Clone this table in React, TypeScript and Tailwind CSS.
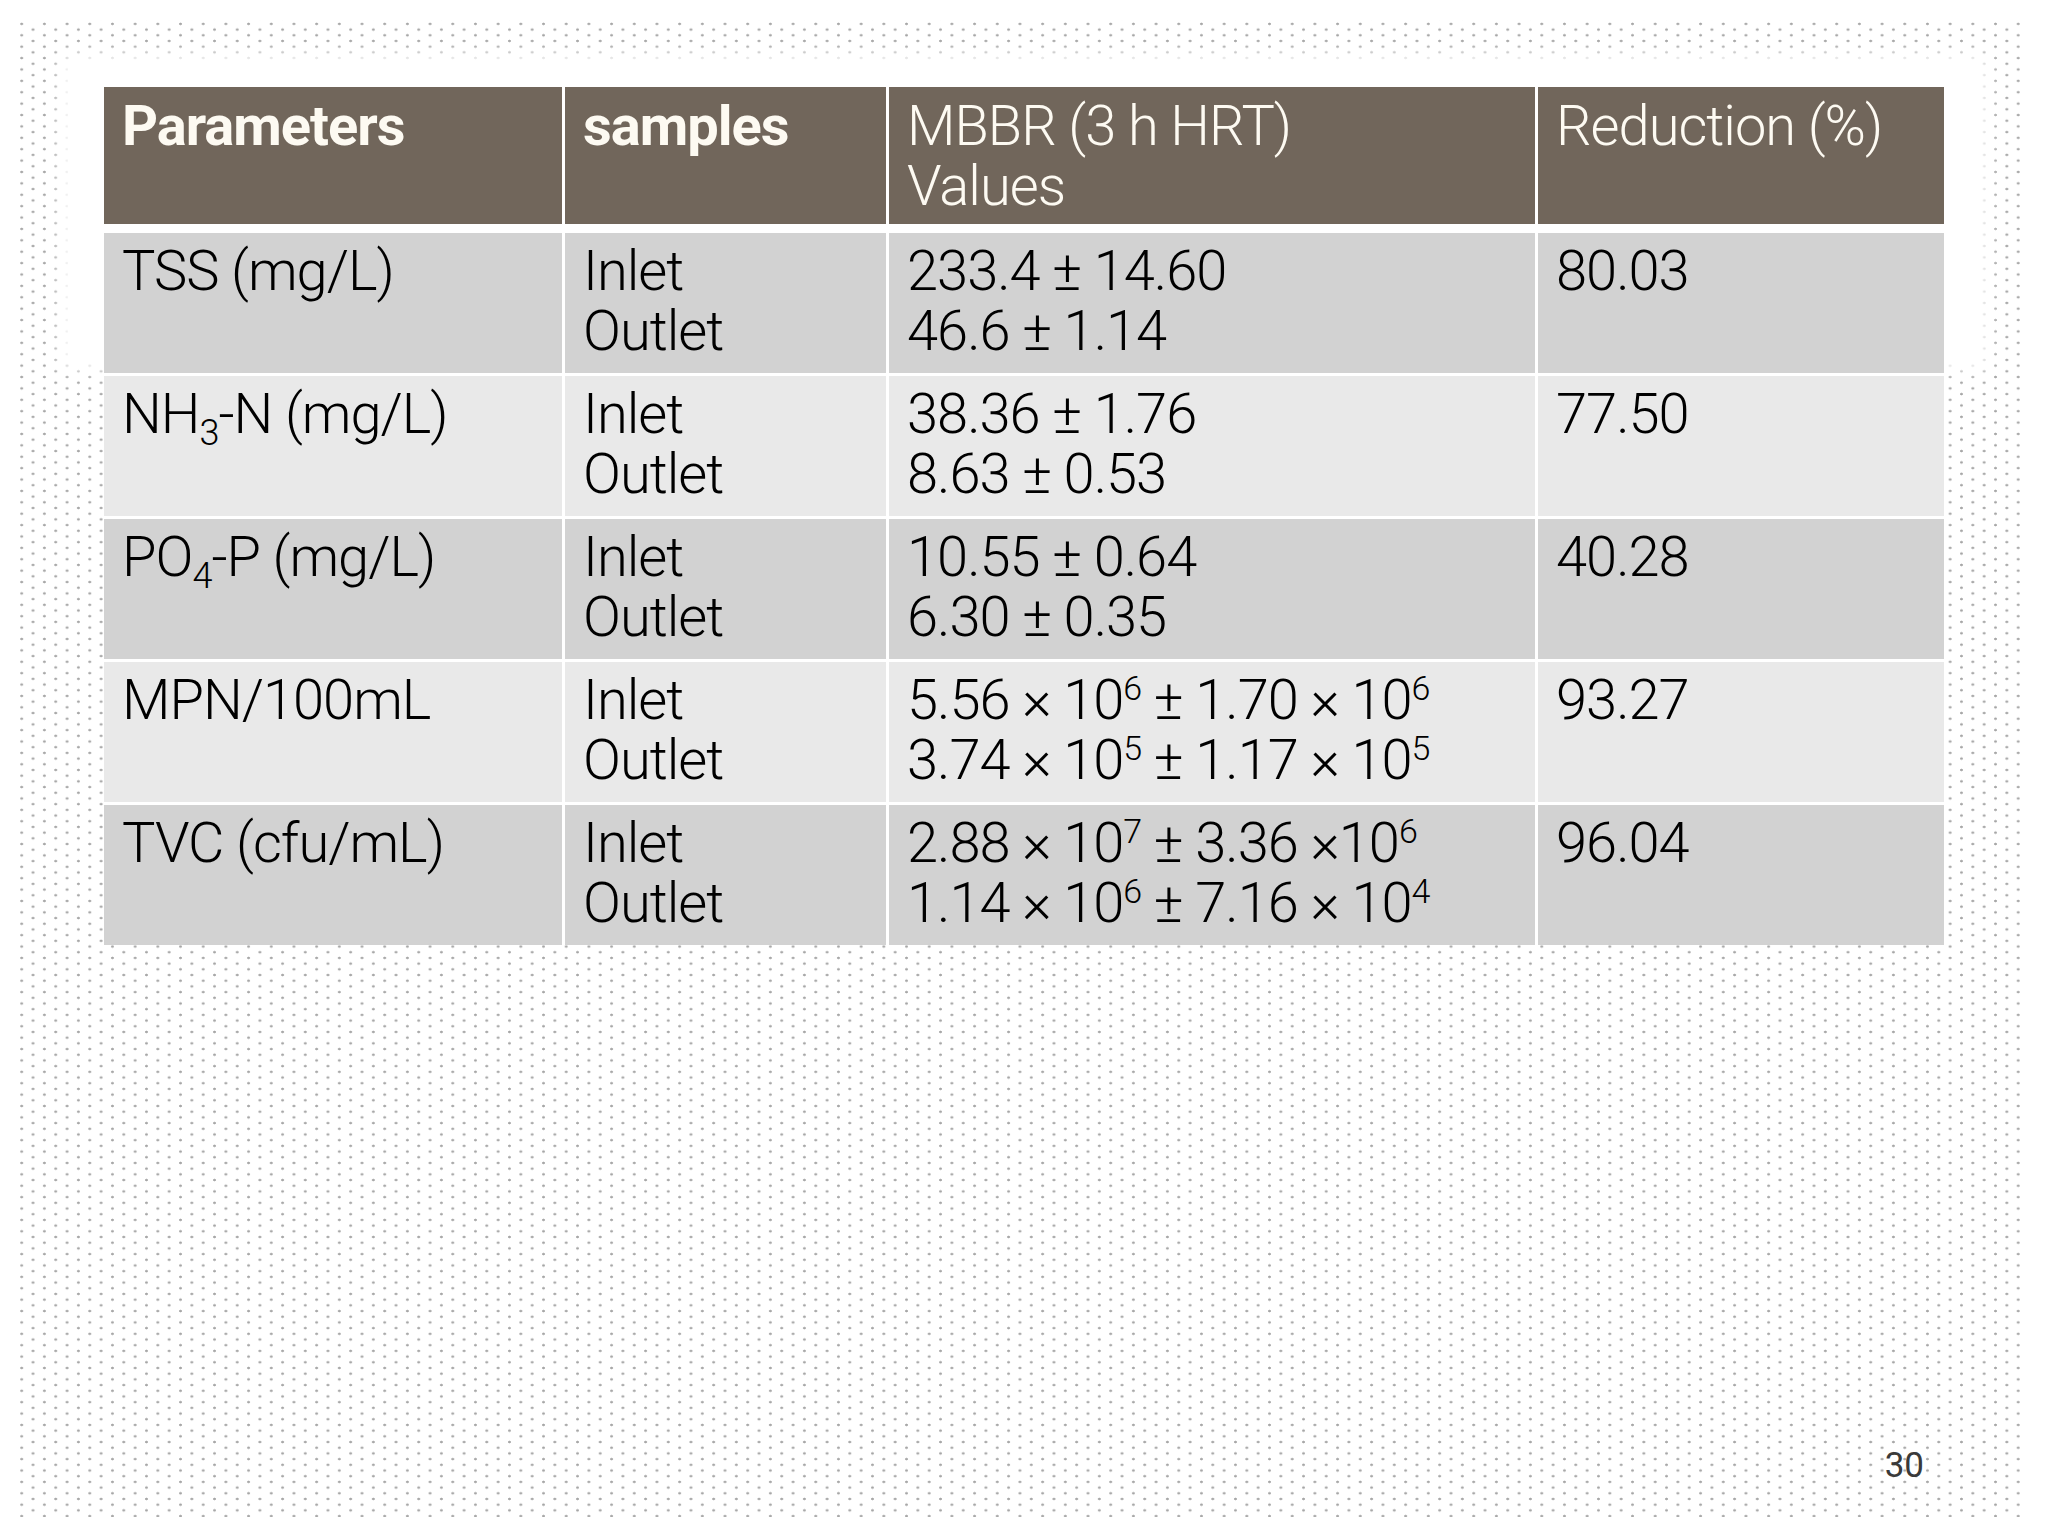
import * as React from "react";

type Row = {
  param: React.ReactNode;
  inlet: React.ReactNode;
  outlet: React.ReactNode;
  reduction: string;
};

const Sup = ({ children }: { children: React.ReactNode }) => (
  <sup className="text-[34px] top-[-19px]">{children}</sup>
);

const Sub = ({ children }: { children: React.ReactNode }) => (
  <sub className="text-[36px] bottom-[-12px]">{children}</sub>
);

const rows: Row[] = [
  {
    param: "TSS (mg/L)",
    inlet: "233.4 ± 14.60",
    outlet: "46.6 ± 1.14",
    reduction: "80.03",
  },
  {
    param: (
      <>
        NH<Sub>3</Sub>-N (mg/L)
      </>
    ),
    inlet: "38.36 ± 1.76",
    outlet: "8.63 ± 0.53",
    reduction: "77.50",
  },
  {
    param: (
      <>
        PO<Sub>4</Sub>-P (mg/L)
      </>
    ),
    inlet: "10.55 ± 0.64",
    outlet: "6.30 ± 0.35",
    reduction: "40.28",
  },
  {
    param: "MPN/100mL",
    inlet: (
      <>
        5.56 × 10<Sup>6</Sup> ± 1.70 × 10<Sup>6</Sup>
      </>
    ),
    outlet: (
      <>
        3.74 × 10<Sup>5</Sup> ± 1.17 × 10<Sup>5</Sup>
      </>
    ),
    reduction: "93.27",
  },
  {
    param: "TVC (cfu/mL)",
    inlet: (
      <>
        2.88 × 10<Sup>7</Sup> ± 3.36 ×10<Sup>6</Sup>
      </>
    ),
    outlet: (
      <>
        1.14 × 10<Sup>6</Sup> ± 7.16 × 10<Sup>4</Sup>
      </>
    ),
    reduction: "96.04",
  },
];

const cols = "grid grid-cols-[458px_321px_646px_406px] gap-x-[3px]";

export default function App() {
  return (
    <div className="w-[2048px] h-[1536px] bg-white p-[20px] font-['Roboto',sans-serif] overflow-hidden">
      <div className="relative w-[2005px] h-[1497px] flex flex-col pl-[84px] pt-[67px] bg-[radial-gradient(circle,#a6a6a6_1px,transparent_1.6px),radial-gradient(circle,#a6a6a6_1px,transparent_1.6px)] [background-size:22.7px_11.4px] [background-position:-9.65px_-1.8px,1.7px_3.9px]">
        {/* white title band behind the top of the table */}
        <div className="absolute left-[48px] top-[42px] w-[1912px] h-[300px] bg-white shadow-[0_0_14px_8px_#ffffff]" />

        <div className="relative w-[1840px] flex flex-col gap-[3px] bg-white text-[56px] leading-[60px] font-light tracking-[-1px]">
          <div className={`${cols} h-[137px] mb-[6px] text-[#fdfaf2]`}>
            <div className="bg-[#71665b] pl-[18px] pt-[9px] font-bold">
              Parameters
            </div>
            <div className="bg-[#71665b] pl-[18px] pt-[9px] font-bold">
              samples
            </div>
            <div className="bg-[#71665b] pl-[18px] pt-[9px]">
              MBBR (3 h HRT)
              <br />
              Values
            </div>
            <div className="bg-[#71665b] pl-[18px] pt-[9px]">Reduction (%)</div>
          </div>

          {rows.map((r, i) => {
            const bg = i % 2 === 0 ? "bg-[#d2d2d2]" : "bg-[#e9e9e9]";
            return (
              <div key={i} className={`${cols} h-[140px] text-black`}>
                <div className={`${bg} pl-[18px] pt-[8px] whitespace-nowrap`}>{r.param}</div>
                <div className={`${bg} pl-[18px] pt-[8px]`}>
                  Inlet
                  <br />
                  Outlet
                </div>
                <div className={`${bg} pl-[18px] pt-[8px] whitespace-nowrap`}>
                  <div>{r.inlet}</div>
                  <div>{r.outlet}</div>
                </div>
                <div className={`${bg} pl-[18px] pt-[8px]`}>{r.reduction}</div>
              </div>
            );
          })}
        </div>

        <div className="flex-1" />
        <div className="relative flex justify-end pr-[101px] pb-[34px] text-[35px] leading-none text-[#3a3a3a]">
          30
        </div>
      </div>
    </div>
  );
}
